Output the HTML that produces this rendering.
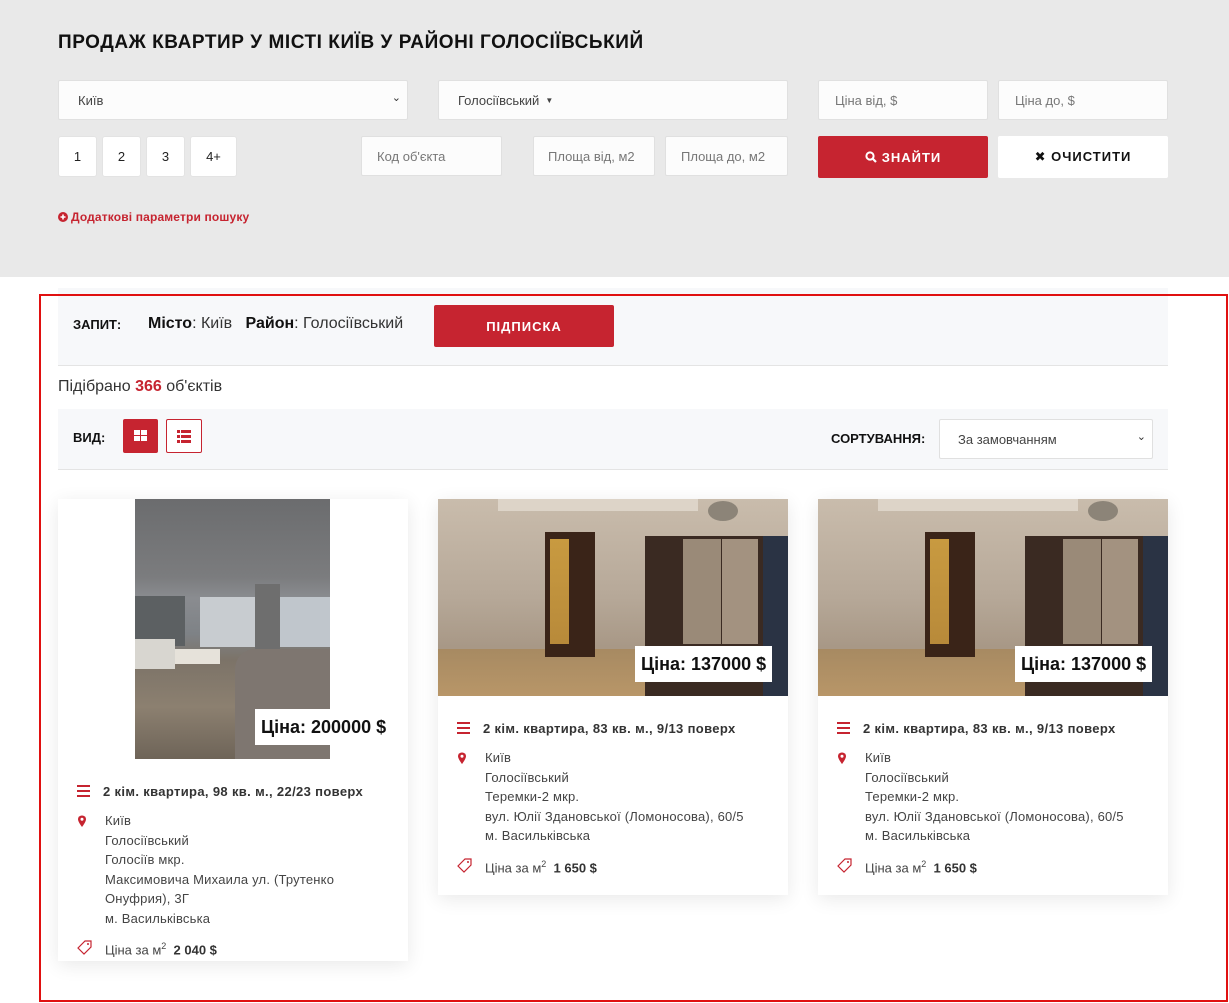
<!DOCTYPE html>
<html><head><meta charset="utf-8">
<style>
*{box-sizing:border-box;margin:0;padding:0}
body{width:1229px;height:1003px;background:#fff;font-family:"Liberation Sans","DejaVu Sans",sans-serif;color:#333;position:relative;overflow:hidden}
.a{position:absolute}
.top{left:0;top:0;width:1229px;height:277px;background:#e9e9e9}
.inp{position:absolute;background:#fcfcfc;border:1px solid #e0e0e0;font-size:13px;color:#777;display:flex;align-items:center;border-radius:2px}
.num{position:absolute;background:#fff;border:1px solid #e3e3e3;border-radius:3px;font-size:13px;color:#222;display:flex;align-items:center;justify-content:center;top:136px;height:41px}
.btn{position:absolute;display:flex;align-items:center;justify-content:center;font-weight:bold;font-size:13px;letter-spacing:1px;border-radius:2px}
.card{position:absolute;background:#fff;box-shadow:0 4px 18px rgba(0,0,0,.09)}
.price{position:absolute;background:#fff;color:#111;font-size:18px;font-weight:bold;padding:0 6px;height:36px;line-height:36px}
.t{position:absolute;font-size:13px;font-weight:bold;color:#333;letter-spacing:0.35px}
.addr{position:absolute;font-size:13px;color:#444;line-height:19.5px;letter-spacing:0.2px}
.m2{position:absolute;font-size:13px;color:#444}
</style></head><body>
<div class="a top"></div>
<div class="a" style="left:58px;top:32px;font-size:19px;font-weight:bold;color:#111;letter-spacing:0.55px">ПРОДАЖ КВАРТИР У МІСТІ КИЇВ У РАЙОНІ ГОЛОСІЇВСЬКИЙ</div>

<div class="inp" style="left:58px;top:80px;width:350px;height:40px;padding-left:19px;color:#444">Київ<span style="position:absolute;right:6px;top:10px;font-size:11px;color:#333">&#8964;</span></div>
<div class="inp" style="left:438px;top:80px;width:350px;height:40px;padding-left:19px;color:#444">Голосіївський <span style="font-size:8px;margin-left:6px">▼</span></div>
<div class="inp" style="left:818px;top:80px;width:170px;height:40px;padding-left:16px">Ціна від, $</div>
<div class="inp" style="left:998px;top:80px;width:170px;height:40px;padding-left:16px">Ціна до, $</div>

<div class="num" style="left:58px;width:39px">1</div>
<div class="num" style="left:102px;width:39px">2</div>
<div class="num" style="left:146px;width:39px">3</div>
<div class="num" style="left:190px;width:47px">4+</div>
<div class="inp" style="left:361px;top:136px;width:141px;height:40px;padding-left:15px">Код об'єкта</div>
<div class="inp" style="left:533px;top:136px;width:122px;height:40px;padding-left:14px">Площа від, м2</div>
<div class="inp" style="left:665px;top:136px;width:123px;height:40px;padding-left:15px">Площа до, м2</div>
<div class="btn" style="left:818px;top:136px;width:170px;height:42px;background:#c62430;color:#fff"><svg width="12" height="12" viewBox="0 0 12 12" style="margin-right:5px"><circle cx="5" cy="5" r="3.6" fill="none" stroke="#fff" stroke-width="2"/><path d="M7.5 7.5L11 11" stroke="#fff" stroke-width="2.2"/></svg>ЗНАЙТИ</div>
<div class="btn" style="left:998px;top:136px;width:170px;height:42px;background:#fff;color:#111">✖ ОЧИСТИТИ</div>
<div class="a" style="left:58px;top:210px;font-size:12px;color:#c62430;font-weight:bold;letter-spacing:0.15px;display:flex;align-items:center"><svg width="10" height="10" viewBox="0 0 10 10" style="margin-right:3px"><circle cx="5" cy="5" r="5" fill="#c62430"/><path d="M5 2.5v5M2.5 5h5" stroke="#fff" stroke-width="1.6"/></svg>Додаткові параметри пошуку</div>

<div class="a" style="left:58px;top:288px;width:1110px;height:78px;background:#f7f8fa;border-bottom:1px solid #e4e4e4"></div>
<div class="a" style="left:73px;top:317px;font-size:13px;font-weight:bold;color:#111">ЗАПИТ:</div>
<div class="a" style="left:148px;top:315px;font-size:16px;color:#333"><b style="color:#111">Місто</b>: Київ &nbsp; <b style="color:#111">Район</b>: Голосіївський</div>
<div class="btn" style="left:434px;top:305px;width:180px;height:42px;background:#c62430;color:#fff">ПІДПИСКА</div>

<div class="a" style="left:58px;top:378px;font-size:16px;color:#333">Підібрано <b style="color:#c62430">366</b> об'єктів</div>

<div class="a" style="left:58px;top:409px;width:1110px;height:61px;background:#f7f8fa;border-bottom:1px solid #e4e4e4"></div>
<div class="a" style="left:73px;top:430px;font-size:13px;font-weight:bold;color:#111">ВИД:</div>
<div class="a" style="left:123px;top:419px;width:35px;height:34px;background:#c62430;border-radius:2px"><div class="a" style="left:11px;top:11px;width:6px;height:5px;background:#fff"></div><div class="a" style="left:18px;top:11px;width:6px;height:5px;background:#fff"></div><div class="a" style="left:11px;top:17px;width:6px;height:5px;background:#fff"></div><div class="a" style="left:18px;top:17px;width:6px;height:5px;background:#fff"></div></div>
<div class="a" style="left:166px;top:419px;width:36px;height:34px;border:1px solid #c62430;border-radius:2px;background:#fff"><div class="a" style="left:10px;top:10px;width:3px;height:3px;background:#c62430;box-shadow:0 5px 0 #c62430,0 10px 0 #c62430"></div><div class="a" style="left:14px;top:10px;width:10px;height:3px;background:#c62430;box-shadow:0 5px 0 #c62430,0 10px 0 #c62430"></div></div>
<div class="a" style="left:831px;top:431px;font-size:13px;font-weight:bold;color:#111">СОРТУВАННЯ:</div>
<div class="inp" style="left:939px;top:419px;width:214px;height:40px;padding-left:18px;background:#fff;color:#444">За замовчанням<span style="position:absolute;right:6px;top:10px;font-size:11px;color:#333">&#8964;</span></div>

<!-- card 1 -->
<div class="card" style="left:58px;top:499px;width:350px;height:462px"></div>
<div class="a" style="left:135px;top:499px;width:195px;height:260px;overflow:hidden;background:linear-gradient(180deg,#6b6c6e 0%,#7b7c7e 30%,#8a8c90 38%,#7e8286 52%,#7c7368 62%,#8c8070 80%,#6e6458 100%)">
 <div class="a" style="left:0;top:97px;width:50px;height:50px;background:#5c6062"></div>
 <div class="a" style="left:65px;top:98px;width:60px;height:50px;background:#c8ccd0"></div>
 <div class="a" style="left:120px;top:85px;width:25px;height:80px;background:#6e6e6e"></div>
 <div class="a" style="left:145px;top:98px;width:50px;height:50px;background:#c0c6cc"></div>
 <div class="a" style="left:0;top:140px;width:40px;height:30px;background:#d8d6d0"></div>
 <div class="a" style="left:100px;top:150px;width:95px;height:110px;background:#7e7670;border-radius:20px 0 0 0"></div>
 <div class="a" style="left:40px;top:150px;width:45px;height:15px;background:#e6e2da"></div>
</div>
<div class="price" style="left:255px;top:709px">Ціна: 200000 $</div>
<div class="a" style="left:77px;top:785px;width:13px;height:2px;background:#c62430;box-shadow:0 5px 0 #c62430,0 10px 0 #c62430"></div>
<div class="t" style="left:103px;top:784px">2 кім. квартира, 98 кв. м., 22/23 поверх</div>
<svg class="a" style="left:77px;top:815px" width="10" height="13" viewBox="0 0 10 13"><path d="M5 0.5C2.3 0.5 1 2.4 1 4.3 1 7 5 12 5 12S9 7 9 4.3C9 2.4 7.7 0.5 5 0.5z" fill="#c62430"/><circle cx="5" cy="4.3" r="1.5" fill="#fff"/></svg>
<div class="addr" style="left:105px;top:811px">Київ<br>Голосіївський<br>Голосіїв мкр.<br>Максимовича Михаила ул. (Трутенко<br>Онуфрия), 3Г<br>м. Васильківська</div>
<svg class="a" style="left:77px;top:940px" width="17" height="15" viewBox="0 0 17 15"><path d="M1 8L8 1h6v6l-7 7z" fill="none" stroke="#c62430" stroke-width="1.2"/><circle cx="11" cy="4" r="1" fill="#c62430"/></svg>
<div class="m2" style="left:105px;top:941px">Ціна за м<sup style="font-size:9px">2</sup> &nbsp;<b style="color:#333">2 040 $</b></div>

<div id="c2"></div>
<script>
function card(x){
 var h='';
 h+='<div class="card" style="left:'+x+'px;top:499px;width:350px;height:396px"></div>';
 h+='<div class="a" style="left:'+x+'px;top:499px;width:350px;height:197px;overflow:hidden;background:linear-gradient(180deg,#c9bcac 0%,#b6a898 50%,#a89886 75%)">'
 +'<div class="a" style="left:60px;top:0;width:200px;height:12px;background:#ddd4c8"></div>'
 +'<div class="a" style="left:0;top:150px;width:350px;height:47px;background:linear-gradient(180deg,#a78a62,#b89668)"></div>'
 +'<div class="a" style="left:107px;top:33px;width:50px;height:125px;background:#3a2418"></div>'
 +'<div class="a" style="left:112px;top:40px;width:19px;height:105px;background:linear-gradient(180deg,#c89a40,#b88a3a)"></div>'
 +'<div class="a" style="left:207px;top:37px;width:143px;height:160px;background:#3a2a22"></div>'
 +'<div class="a" style="left:245px;top:40px;width:38px;height:105px;background:#9a8a78"></div>'
 +'<div class="a" style="left:284px;top:40px;width:36px;height:105px;background:#a39280"></div>'
 +'<div class="a" style="left:325px;top:37px;width:25px;height:160px;background:#2a3344"></div>'
 +'<div class="a" style="left:270px;top:2px;width:30px;height:20px;background:#8c8478;border-radius:50%"></div>'
 +'</div>';
 h+='<div class="price" style="left:'+(x+197)+'px;top:646px">Ціна: 137000 $</div>';
 h+='<div class="a" style="left:'+(x+19)+'px;top:722px;width:13px;height:2px;background:#c62430;box-shadow:0 5px 0 #c62430,0 10px 0 #c62430"></div>';
 h+='<div class="t" style="left:'+(x+45)+'px;top:721px">2 кім. квартира, 83 кв. м., 9/13 поверх</div>';
 h+='<svg class="a" style="left:'+(x+19)+'px;top:752px" width="10" height="13" viewBox="0 0 10 13"><path d="M5 0.5C2.3 0.5 1 2.4 1 4.3 1 7 5 12 5 12S9 7 9 4.3C9 2.4 7.7 0.5 5 0.5z" fill="#c62430"/><circle cx="5" cy="4.3" r="1.5" fill="#fff"/></svg>';
 h+='<div class="addr" style="left:'+(x+47)+'px;top:748px">Київ<br>Голосіївський<br>Теремки-2 мкр.<br>вул. Юлії Здановської (Ломоносова), 60/5<br>м. Васильківська</div>';
 h+='<svg class="a" style="left:'+(x+19)+'px;top:858px" width="17" height="15" viewBox="0 0 17 15"><path d="M1 8L8 1h6v6l-7 7z" fill="none" stroke="#c62430" stroke-width="1.2"/><circle cx="11" cy="4" r="1" fill="#c62430"/></svg>';
 h+='<div class="m2" style="left:'+(x+47)+'px;top:859px">Ціна за м<sup style="font-size:9px">2</sup> &nbsp;<b style="color:#333">1 650 $</b></div>';
 return h;
}
document.getElementById('c2').outerHTML=card(438)+card(818);
</script>
<!-- red outline on top -->
<div class="a" style="left:39px;top:294px;width:1189px;height:708px;border:2px solid #e01010;z-index:5"></div>
</body></html>
